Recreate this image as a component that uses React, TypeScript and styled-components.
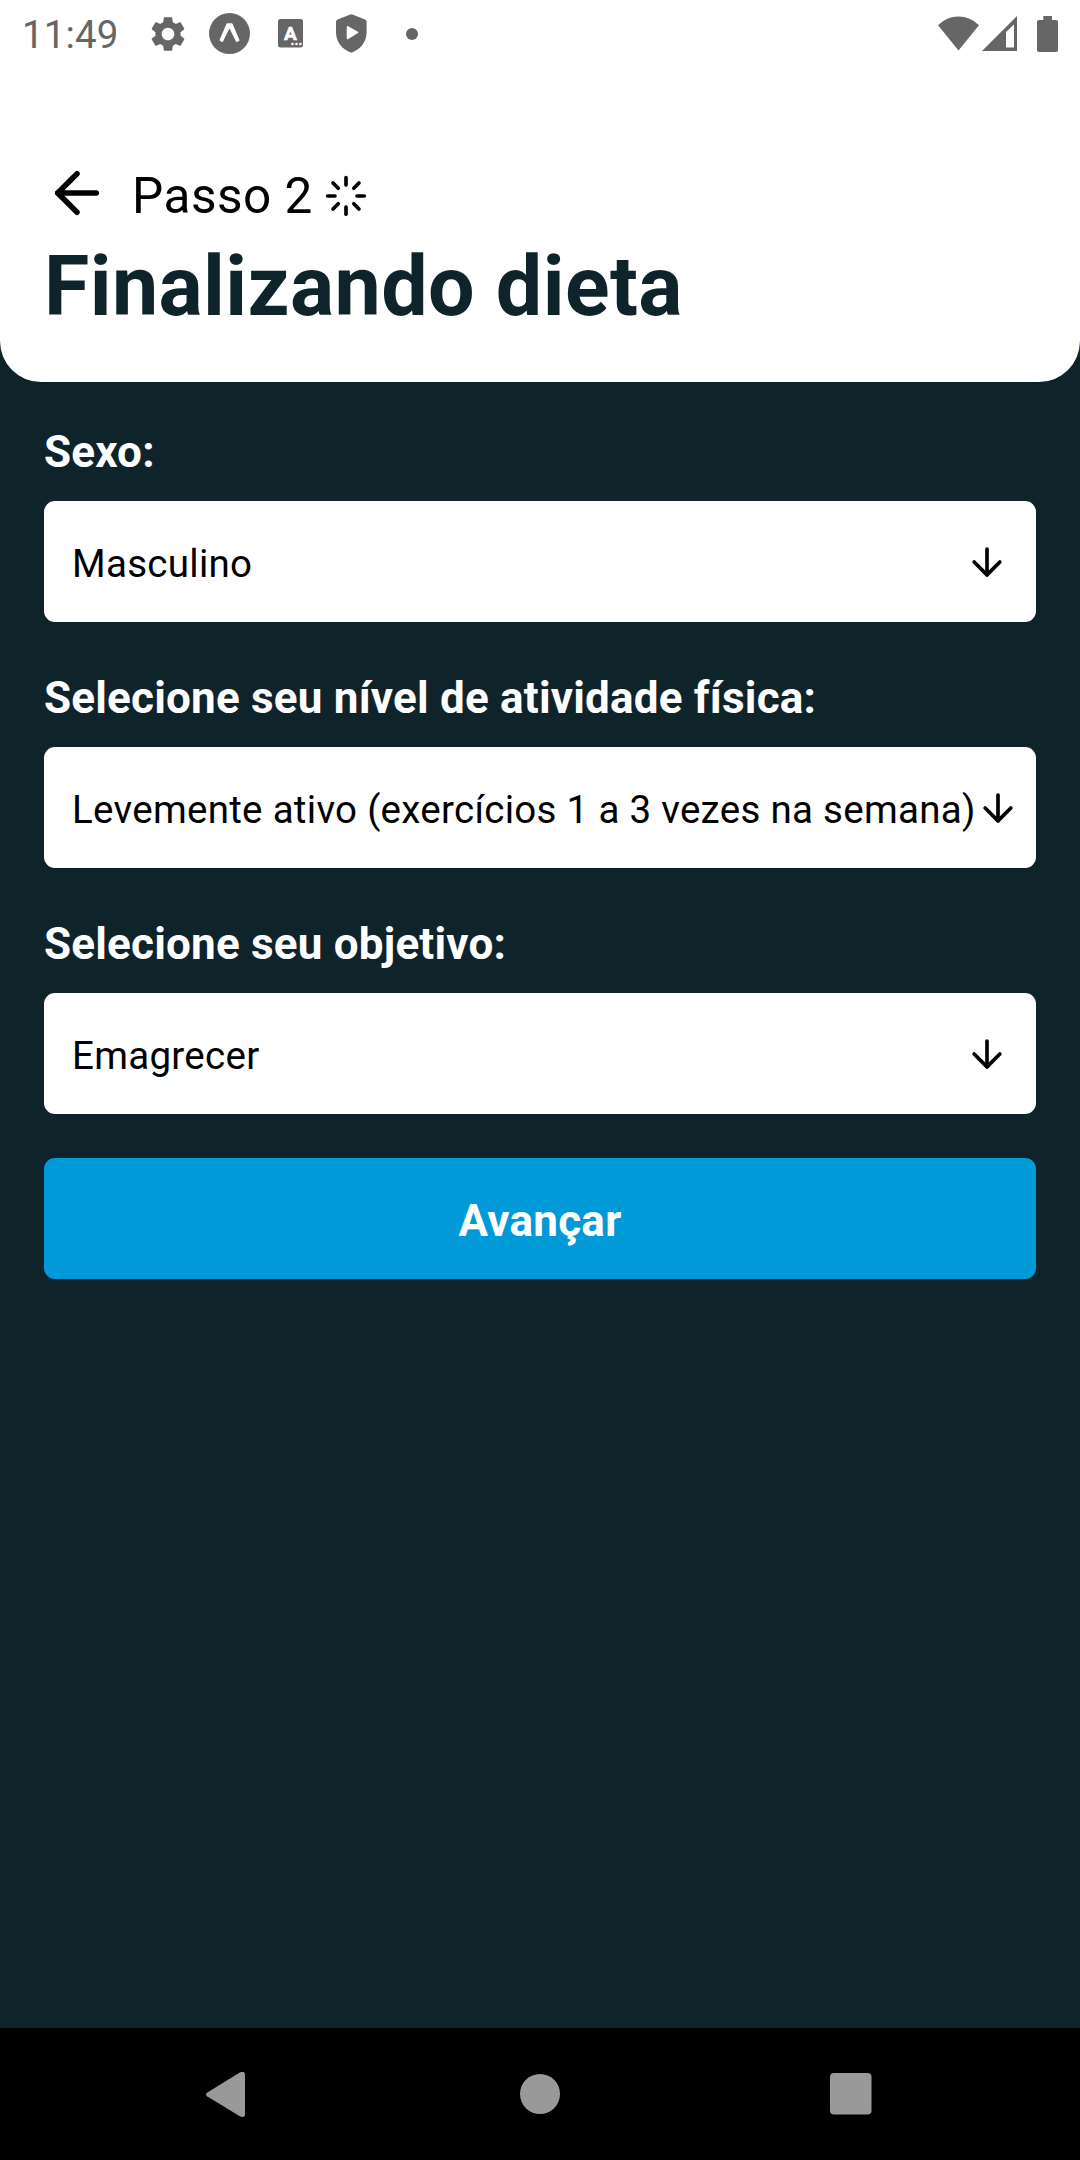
import React from 'react';
import styled, { createGlobalStyle } from 'styled-components';

const GlobalStyle = createGlobalStyle`
  * { box-sizing: border-box; }
  body { margin: 0; background: #0f232b; }
`;

const Screen = styled.div`
  display: flex;
  flex-direction: column;
  width: 1080px;
  height: 2160px;
  background: #0f232b;
  font-family: Roboto, 'Liberation Sans', sans-serif;
  overflow: hidden;
  white-space: nowrap;

  svg {
    display: block;
    flex: none;
  }
`;

const Header = styled.header`
  height: 382px;
  background: #fff;
  border-radius: 0 0 41px 41px;
`;

const StatusBar = styled.div`
  display: flex;
  align-items: center;
  justify-content: space-between;
  height: 67px;
  padding: 0 22px;
  color: #666;
`;

const StatusGroup = styled.div`
  display: flex;
  align-items: center;
`;

const Clock = styled.span`
  width: 125px;
  padding-top: 2px;
  font-size: 38.5px;
  line-height: 45px;
  letter-spacing: 0.1px;
`;

const StatusIcon = styled.svg<{ $after?: number }>`
  margin-right: ${(p) => p.$after ?? 0}px;
  fill: currentColor;
`;

const StepRow = styled.div`
  display: flex;
  align-items: center;
  height: 58px;
  margin: 100px 44px 0;
`;

const BackButton = styled.button`
  display: flex;
  margin: -6px 22px 0 0;
  padding: 0;
  border: 0;
  background: none;
  color: #000;
`;

const StepText = styled.span`
  width: 192px;
  font-size: 49.5px;
  line-height: 58px;
  letter-spacing: 0.5px;
  color: #000;
`;

const Title = styled.h1`
  margin: 13px 44px 0;
  font-size: 82.5px;
  line-height: 97px;
  letter-spacing: 0.4px;
  font-weight: 700;
  color: #0f232b;
`;

const Form = styled.main`
  display: flex;
  flex: 1;
  flex-direction: column;
  gap: 50px;
  padding: 44px 44px 0;
`;

const Field = styled.div`
  display: flex;
  flex-direction: column;
  gap: 23px;
`;

const Label = styled.label`
  font-size: 44px;
  line-height: 52px;
  letter-spacing: 0.2px;
  font-weight: 700;
  color: #fff;
`;

const Select = styled.div<{ $tight?: boolean }>`
  display: flex;
  align-items: center;
  justify-content: space-between;
  height: 121px;
  padding: 0 ${(p) => (p.$tight ? 16 : 27)}px 0 28px;
  border-radius: 11px;
  background: #fff;
  color: #000;
`;

const Value = styled.span`
  padding-top: 4px;
  font-size: 38.5px;
  line-height: 45px;
  letter-spacing: 0.29px;
`;

const Submit = styled.button`
  height: 121px;
  margin-top: -6px;
  padding: 4px 0 0;
  border: 0;
  border-radius: 11px;
  background: #009ad8;
  color: #fff;
  font-family: inherit;
  font-size: 44px;
  line-height: 52px;
  letter-spacing: 0.25px;
  font-weight: 700;
`;

const NavBar = styled.nav`
  display: flex;
  align-items: center;
  justify-content: space-between;
  height: 132px;
  padding: 0 208px 0 206px;
  background: #000;

  svg { fill: #999; }
`;

const HomeIcon = styled.svg`
  margin-left: 5px;
`;

const Feather = styled.svg.attrs({ viewBox: '0 0 24 24' })`
  fill: none;
  stroke: currentColor;
  stroke-width: 2;
  stroke-linecap: round;
  stroke-linejoin: round;
`;

const ArrowLeft = () => (
  <Feather width={66} height={66}>
    <line x1="19" y1="12" x2="5" y2="12" />
    <polyline points="12 19 5 12 12 5" />
  </Feather>
);

const ArrowDown = () => (
  <Feather width={44} height={44}>
    <line x1="12" y1="5" x2="12" y2="19" />
    <polyline points="19 12 12 19 5 12" />
  </Feather>
);

const Loader = () => (
  <Feather width={44} height={44}>
    <line x1="12" y1="2" x2="12" y2="6" />
    <line x1="12" y1="18" x2="12" y2="22" />
    <line x1="4.93" y1="4.93" x2="7.76" y2="7.76" />
    <line x1="16.24" y1="16.24" x2="19.07" y2="19.07" />
    <line x1="2" y1="12" x2="6" y2="12" />
    <line x1="18" y1="12" x2="22" y2="12" />
    <line x1="4.93" y1="19.07" x2="7.76" y2="16.24" />
    <line x1="16.24" y1="7.76" x2="19.07" y2="4.93" />
  </Feather>
);

const fields = [
  { label: 'Sexo:', value: 'Masculino' },
  {
    label: 'Selecione seu nível de atividade física:',
    value: 'Levemente ativo (exercícios 1 a 3 vezes na semana)',
    tight: true,
  },
  { label: 'Selecione seu objetivo:', value: 'Emagrecer' },
];

export default function App() {
  return (
    <>
      <GlobalStyle />
      <Screen>
        <Header>
          <StatusBar>
            <StatusGroup>
              <Clock>11:49</Clock>
              <StatusIcon width={42} height={42} viewBox="0 0 24 24" $after={20}>
                <path d="M19.14 12.94c.04-.3.06-.61.06-.94 0-.32-.02-.64-.07-.94l2.03-1.58c.18-.14.23-.41.12-.61l-1.92-3.32c-.12-.22-.37-.29-.59-.22l-2.39.96c-.5-.38-1.03-.7-1.62-.94L14.4 2.81c-.04-.24-.24-.41-.48-.41h-3.84c-.24 0-.43.17-.47.41L9.25 5.35c-.59.24-1.13.57-1.62.94l-2.39-.96c-.22-.08-.47 0-.59.22L2.74 8.87c-.12.21-.08.47.12.61l2.03 1.58c-.05.3-.09.63-.09.94s.02.64.07.94l-2.03 1.58c-.18.14-.23.41-.12.61l1.92 3.32c.12.22.37.29.59.22l2.39-.96c.5.38 1.03.7 1.62.94l.36 2.54c.05.24.24.41.48.41h3.84c.24 0 .44-.17.47-.41l.36-2.54c.59-.24 1.13-.56 1.62-.94l2.39.96c.22.08.47 0 .59-.22l1.92-3.32c.12-.22.07-.47-.12-.61l-2.01-1.58zM12 15.6c-1.98 0-3.6-1.62-3.6-3.6s1.62-3.6 3.6-3.6 3.6 1.62 3.6 3.6-1.62 3.6-3.6 3.6z" />
              </StatusIcon>
              <StatusIcon width={41} height={41} viewBox="0 0 41 41" $after={28}>
                <circle cx="20.5" cy="20.5" r="20.5" />
                <path
                  fill="#fff"
                  d="M18.2 10.3h4.6q.5 0 .7.5l7 16.2q.2.5-.3.8l-2.2 1.2q-.6.3-.9-.3l-6.3-12.8q-.3-.5-.6 0l-6.3 12.8q-.3.6-.9.3l-2.2-1.2q-.5-.3-.3-.8l7-16.2q.2-.5.7-.5z"
                />
              </StatusIcon>
              <StatusIcon width={25} height={29} viewBox="0 0 25 29" $after={33}>
                <rect width="25" height="28.5" rx="2.5" />
                <text
                  x="12.3"
                  y="20.6"
                  fill="#fff"
                  stroke="#fff"
                  strokeWidth="0.6"
                  fontSize="19"
                  fontWeight="700"
                  textAnchor="middle"
                >
                  A
                </text>
                <g fill="#fff">
                  <circle cx="14.5" cy="25" r="1.3" />
                  <circle cx="18.5" cy="25" r="1.3" />
                  <circle cx="22.4" cy="25" r="1.3" />
                </g>
              </StatusIcon>
              <StatusIcon width={31} height={39} viewBox="0 0 31 39" $after={39}>
                <path d="M14.3.4q1-.5 2 0L29 5.4q1.6.7 1.6 2.4V18.5C30.6 27.5 24.5 35.500 16 38.4q-.7.2-1.4 0C6.1 35.500 0 27.5 0 18.5V7.8q0-1.7 1.6-2.400z" />
                <path
                  fill="#fff"
                  d="M10.7 13.2q0-1.900 1.700-1l9.500 5.500q1.200.7 0 1.400l-9.500 5.900q-1.700.9-1.700-1z"
                />
              </StatusIcon>
              <StatusIcon width={12} height={12} viewBox="0 0 12 12">
                <circle cx="6" cy="6" r="6" />
              </StatusIcon>
            </StatusGroup>
            <StatusGroup>
              <StatusIcon width={41} height={35} viewBox="0 0 41 35" $after={3}>
                <path d="M0 9.200A28.500 28.500 0 0 1 41 9.200L20.500 34.500z" />
              </StatusIcon>
              <StatusIcon width={35} height={35} viewBox="0 0 35 35" $after={20}>
                <path fillRule="evenodd" d="M35 0V35H0zM24 16V31.500H32V8.500z" />
              </StatusIcon>
              <StatusIcon width={21} height={36} viewBox="0 0 21 36">
                <path d="M6.300 0h8.700v4h4q2 0 2 2v28q0 2-2 2H2q-2 0-2-2V6q0-2 2-2h4.300z" />
              </StatusIcon>
            </StatusGroup>
          </StatusBar>
          <StepRow>
            <BackButton aria-label="Voltar">
              <ArrowLeft />
            </BackButton>
            <StepText>Passo 2</StepText>
            <Loader />
          </StepRow>
          <Title>Finalizando dieta</Title>
        </Header>
        <Form>
          {fields.map((f) => (
            <Field key={f.label}>
              <Label>{f.label}</Label>
              <Select $tight={f.tight}>
                <Value>{f.value}</Value>
                <ArrowDown />
              </Select>
            </Field>
          ))}
          <Submit>Avançar</Submit>
        </Form>
        <NavBar>
          <svg width={39} height={45} viewBox="0 0 39 45">
            <path d="M1 20.700L33.800.6Q39 -1.800 39 3V42Q39 46.500 33.800 44.200L1 24.300Q-.9 22.500 1 20.700z" />
          </svg>
          <HomeIcon width={40} height={40} viewBox="0 0 40 40">
            <circle cx="20" cy="20" r="20" />
          </HomeIcon>
          <svg width={42} height={42} viewBox="0 0 42 42">
            <rect width="41.500" height="41.500" rx="4" />
          </svg>
        </NavBar>
      </Screen>
    </>
  );
}
